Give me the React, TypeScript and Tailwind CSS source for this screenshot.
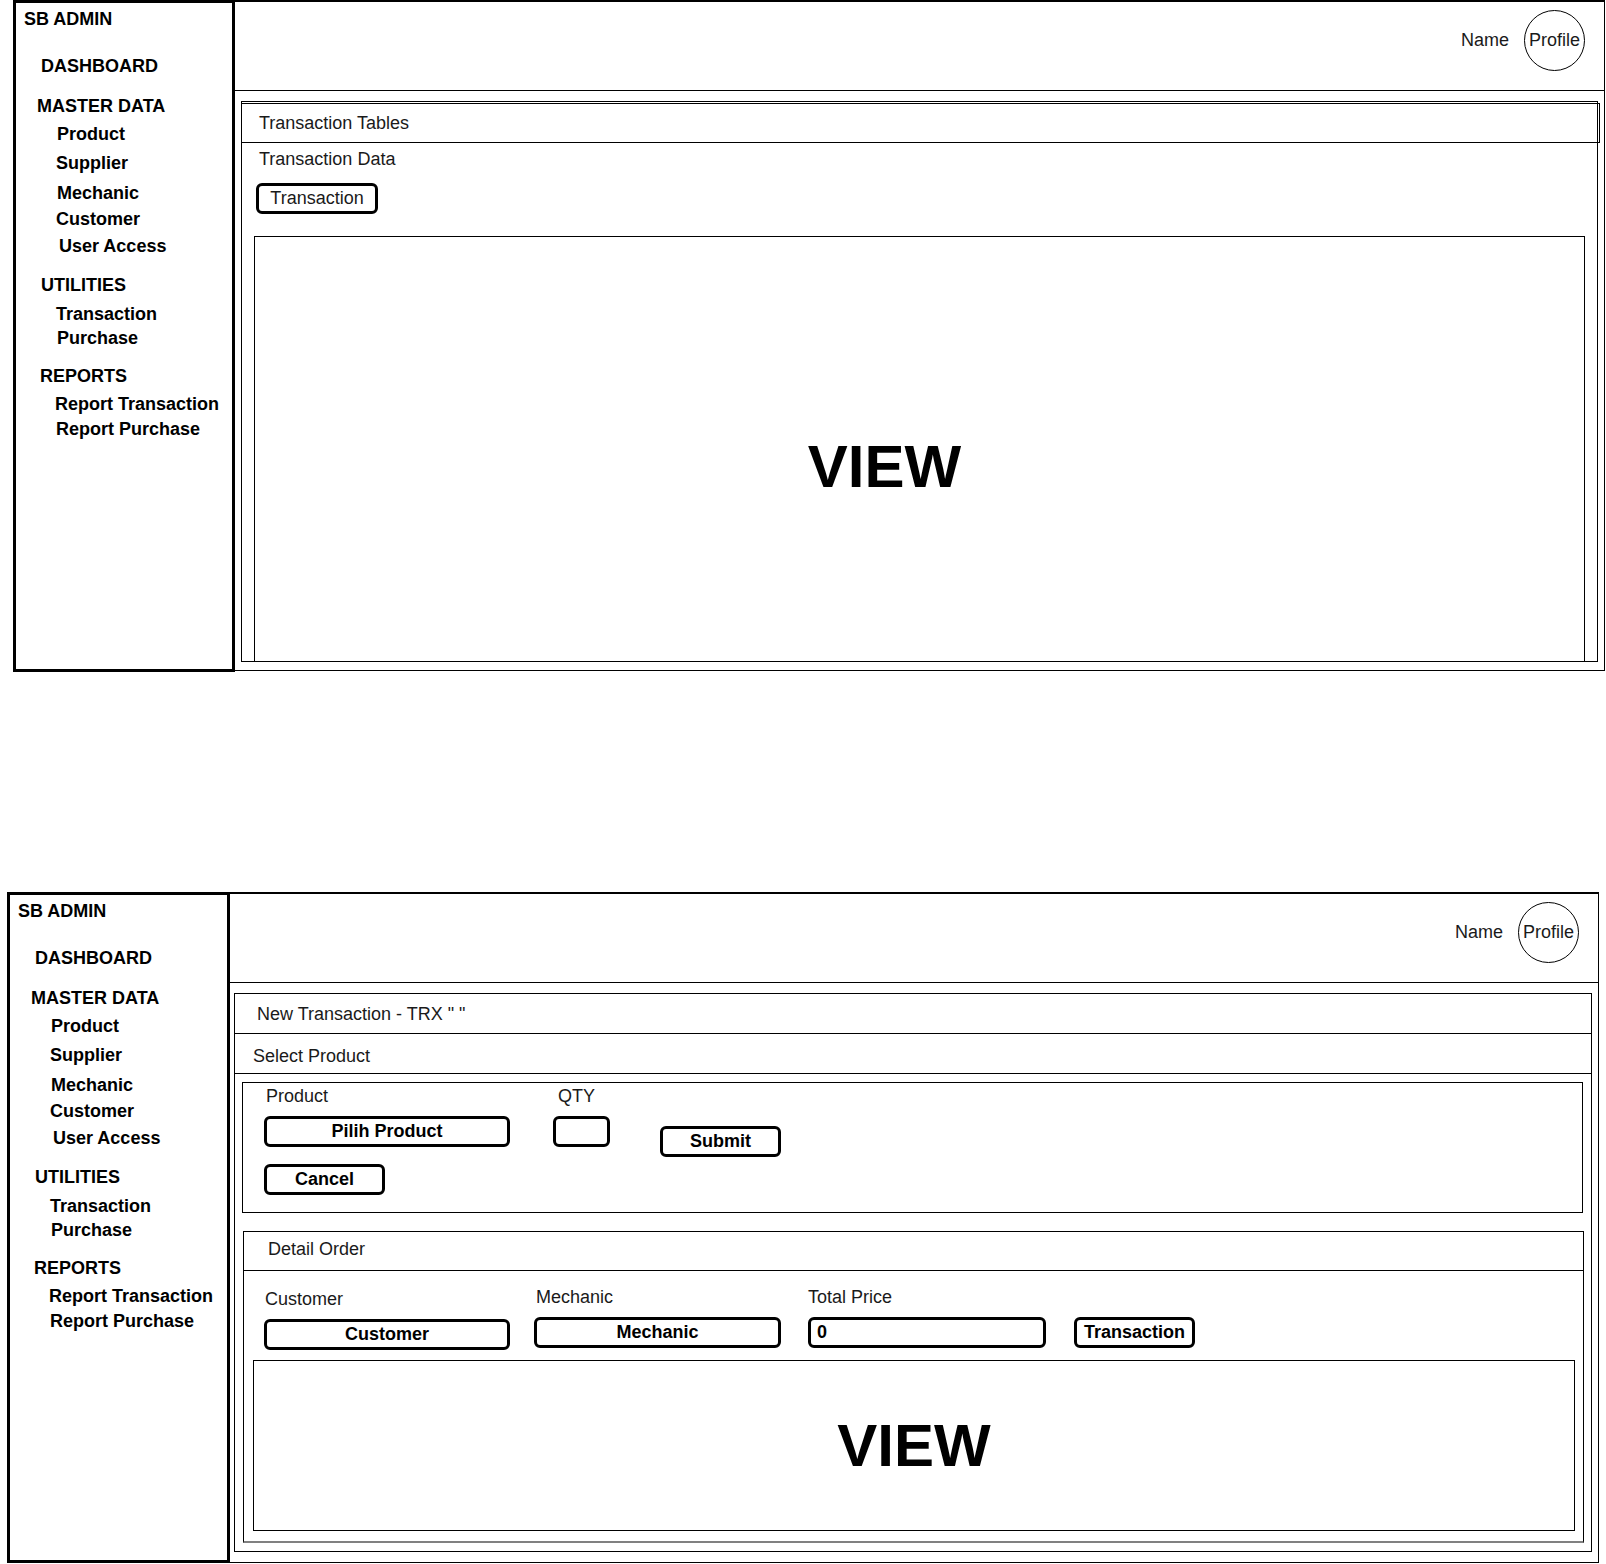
import type { ReactNode } from 'react'

// sidebar entries: label + its own offsets (wireframe spacing is irregular)
const NAV: [string, string][] = [
  ['SB ADMIN', 'ml-[8px] mt-[6px]'],
  ['DASHBOARD', 'ml-[25px] mt-[27px]'],
  ['MASTER DATA', 'ml-[21px] mt-[20px]'],
  ['Product', 'ml-[41px] mt-[8px]'],
  ['Supplier', 'ml-[40px] mt-[9px]'],
  ['Mechanic', 'ml-[41px] mt-[10px]'],
  ['Customer', 'ml-[40px] mt-[6px]'],
  ['User Access', 'ml-[43px] mt-[7px]'],
  ['UTILITIES', 'ml-[25px] mt-[19px]'],
  ['Transaction', 'ml-[40px] mt-[9px]'],
  ['Purchase', 'ml-[41px] mt-[4px]'],
  ['REPORTS', 'ml-[24px] mt-[18px]'],
  ['Report Transaction', 'ml-[39px] mt-[8px]'],
  ['Report Purchase', 'ml-[40px] mt-[5px]'],
]

function Sidebar({ width }: { width: string }) {
  return (
    <aside className={`${width} shrink-0 h-full border-[3px] border-black flex flex-col`}>
      {NAV.map(([label, cls]) => (
        <div key={label} className={`h-[20px] leading-[20px] font-bold text-black whitespace-nowrap ${cls}`}>
          {label}
        </div>
      ))}
    </aside>
  )
}

function TopBar() {
  return (
    <div className="h-[89px] shrink-0 border-b border-black flex justify-end items-start pt-[8px] pr-[19px]">
      <div className="flex items-center gap-[15px]">
        <span className="text-[#1a1a1a]">Name</span>
        <div className="w-[61px] h-[61px] rounded-full border border-black flex items-center justify-center text-[#1a1a1a]">
          Profile
        </div>
      </div>
    </div>
  )
}

function Btn({ className, children }: { className: string; children?: ReactNode }) {
  return (
    <div className={`h-[31px] border-[3px] border-black rounded-[6px] flex items-center justify-center font-bold text-black ${className}`}>
      {children}
    </div>
  )
}

function View({ className }: { className: string }) {
  return (
    <div className={`flex-1 border-black flex items-center justify-center ${className}`}>
      <span className="text-[60px] leading-none font-bold text-black">VIEW</span>
    </div>
  )
}

export default function App() {
  return (
    <div className="w-[1606px] h-[1564px] bg-white overflow-hidden text-[18px] font-['Liberation_Sans',Arial,sans-serif]">
      {/* Transaction list */}
      <section className="flex ml-[13px] h-[672px]">
        <Sidebar width="w-[222px]" />
        <div className="w-[1370px] h-[671px] border-t-2 border-r border-b border-black flex flex-col">
          <TopBar />
          <div className="flex-1 mt-[10px] mb-[8px] ml-[6px] mr-[6px] border border-black flex flex-col">
            <div className="h-[40px] mt-[1px] -mr-[3px] border-y border-r border-black flex items-center pl-[17px] text-[#1a1a1a]">
              Transaction Tables
            </div>
            <div className="mt-[6px] pl-[17px] leading-[20px] text-[#1a1a1a]">Transaction Data</div>
            <div className="self-start mt-[14px] ml-[14px] w-[122px] h-[31px] border-[3px] border-black rounded-[6px] flex items-center justify-center text-[#1a1a1a]">
              Transaction
            </div>
            <View className="mt-[22px] mx-[12px] border-x border-t pr-[70px] pt-[35px]" />
          </div>
        </div>
      </section>

      {/* New transaction form */}
      <section className="flex ml-[7px] mt-[220px] h-[671px]">
        <Sidebar width="w-[223px]" />
        <div className="w-[1369px] h-[671px] border-t-2 border-r border-b border-black flex flex-col">
          <TopBar />
          <div className="flex-1 mt-[10px] mb-[10px] ml-[4px] mr-[6px] border border-black flex flex-col">
            <div className="h-[40px] shrink-0 border-b border-black flex items-center pl-[22px] pt-[2px] text-[#1a1a1a]">
              New Transaction - TRX " "
            </div>
            <div className="h-[40px] shrink-0 border-b border-black flex items-center pl-[18px] pt-[5px] text-[#1a1a1a]">
              Select Product
            </div>

            <div className="h-[131px] shrink-0 mt-[8px] ml-[7px] mr-[8px] border border-black flex items-start pl-[21px]">
              <div className="w-[246px] flex flex-col">
                <div className="mt-[3px] pl-[2px] leading-[20px] text-[#1a1a1a]">Product</div>
                <Btn className="mt-[10px] w-[246px]">Pilih Product</Btn>
                <Btn className="mt-[17px] w-[121px]">Cancel</Btn>
              </div>
              <div className="ml-[43px] w-[57px] flex flex-col">
                <div className="mt-[3px] pl-[5px] leading-[20px] text-[#1a1a1a]">QTY</div>
                <Btn className="mt-[10px] w-[57px]" />
              </div>
              <Btn className="ml-[50px] mt-[43px] w-[121px]">Submit</Btn>
            </div>

            <div className="flex-1 mt-[18px] mb-[8px] ml-[8px] mr-[7px] border border-black border-b-2 border-b-[#808080] flex flex-col">
              <div className="h-[39px] shrink-0 border-b border-black flex items-center pl-[24px] pb-[4px] text-[#1a1a1a]">
                Detail Order
              </div>
              <div className="flex items-start pl-[20px] pt-[16px]">
                <div className="w-[246px] pt-[2px] flex flex-col">
                  <div className="pl-[1px] leading-[20px] text-[#1a1a1a]">Customer</div>
                  <Btn className="mt-[10px] w-[246px]">Customer</Btn>
                </div>
                <div className="ml-[24px] w-[247px] flex flex-col">
                  <div className="pl-[2px] leading-[20px] text-[#1a1a1a]">Mechanic</div>
                  <Btn className="mt-[10px] w-[247px]">Mechanic</Btn>
                </div>
                <div className="ml-[27px] w-[238px] flex flex-col">
                  <div className="leading-[20px] text-[#1a1a1a]">Total Price</div>
                  <Btn className="mt-[10px] w-[238px] !justify-start pl-[6px]">0</Btn>
                </div>
                <Btn className="ml-[28px] mt-[30px] w-[121px]">Transaction</Btn>
              </div>
              <View className="mt-[10px] mb-[10px] ml-[9px] mr-[8px] border" />
            </div>
          </div>
        </div>
      </section>
    </div>
  )
}
